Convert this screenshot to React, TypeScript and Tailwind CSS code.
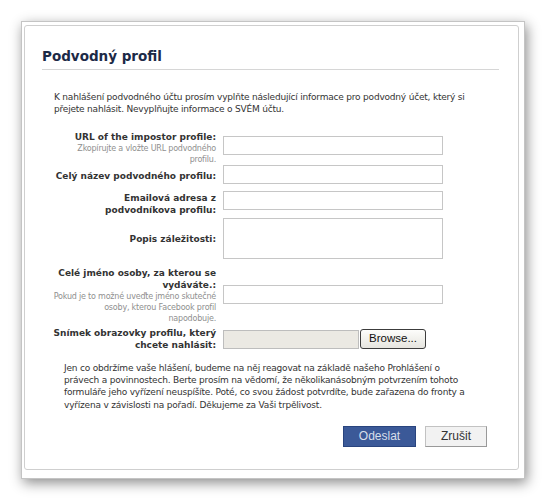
const LABEL = "w-[191px] shrink-0 text-right font-bold text-[9px] leading-[12px] text-[#333]";
const HINT = "text-[8px] leading-[11px] font-normal tracking-[-0.2px] text-[#8f8f8f]";
const FIELD = "block h-[19px] w-[220px] border border-[#c6c6c6] bg-white";

export default function App() {
  return (
    <main className="min-h-[500px] w-[546px] bg-white pl-[21px] pt-[21px] font-['DejaVu_Sans',sans-serif]">
      <div className="h-[458px] w-[504px] border border-[#c4c4c4] bg-white pl-[2px] pt-[3px] shadow-[2px_4px_12px_rgba(0,0,0,0.45)]">
        <div className="h-[445px] w-[495px] rounded-[3px] border border-[#cfcfcf]">
          <div className="ml-[17px] mr-[19px] mt-[22px] border-b border-[#d6d6d6] pb-[5px]">
            <h1 className="text-[13.5px] font-bold leading-[16px] text-[#1c2a47]">Podvodný profil</h1>
          </div>

          <p className="ml-[29px] mt-[21px] text-[9px] leading-[12px] tracking-[-0.2px] text-[#333]">
            K nahlášení podvodného účtu prosím vyplňte následující informace pro podvodný účet, který si
            <br />
            přejete nahlásit. Nevyplňujte informace o SVÉM účtu.
          </p>

          <form className="mt-[16px]" onSubmit={(e) => e.preventDefault()}>
            <div className="flex items-start gap-[7px]">
              <div className={LABEL}>
                <div>URL of the impostor profile:</div>
                <div className={HINT}>
                  Zkopírujte a vložte URL podvodného
                  <br />
                  profilu.
                </div>
              </div>
              <input className={`${FIELD} mt-[5px]`} />
            </div>

            <div className="flex items-start gap-[7px]">
              <div className={`${LABEL} mt-[5px]`}>Celý název podvodného profilu:</div>
              <input className={FIELD} />
            </div>

            <div className="mt-[7px] flex items-start gap-[7px]">
              <div className={`${LABEL} mt-[1px]`}>
                Emailová adresa z
                <br />
                podvodníkova profilu:
              </div>
              <input className={FIELD} />
            </div>

            <div className="mt-[2px] flex items-center gap-[7px]">
              <div className={LABEL}>Popis záležitosti:</div>
              <textarea className="block h-[41px] w-[220px] resize-none border border-[#c6c6c6] bg-white" />
            </div>

            <div className="mt-[8px] flex items-start gap-[7px]">
              <div className={LABEL}>
                Celé jméno osoby, za kterou se
                <br />
                vydáváte.:
                <div className={HINT}>
                  Pokud je to možné uveďte jméno skutečné
                  <br />
                  osoby, kterou Facebook profil
                  <br />
                  napodobuje.
                </div>
              </div>
              <input className={`${FIELD} mt-[18px]`} />
            </div>

            <div className="mt-[3px] flex items-start gap-[7px]">
              <div className={LABEL}>
                Snímek obrazovky profilu, který
                <br />
                chcete nahlásit:
              </div>
              <div className="mt-[2px] flex items-center">
                <div className="h-[19px] w-[136px] border border-[#bdbdbd] bg-[#ebe9e3]" />
                <button
                  type="button"
                  className="ml-[1px] h-[20px] w-[66px] rounded-[3px] border border-[#3c3c3c] bg-gradient-to-b from-[#fdfdfb] to-[#e6e5df] font-['Liberation_Sans',sans-serif] text-[11.5px] leading-none text-[#111]"
                >
                  Browse...
                </button>
              </div>
            </div>

            <p className="ml-[39px] mt-[11px] text-[9px] leading-[12.2px] tracking-[-0.2px] text-[#333]">
              Jen co obdržíme vaše hlášení, budeme na něj reagovat na základě našeho Prohlášení o
              <br />
              právech a povinnostech. Berte prosím na vědomí, že několikanásobným potvrzením tohoto
              <br />
              formuláře jeho vyřízení neuspíšíte. Poté, co svou žádost potvrdíte, bude zařazena do fronty a
              <br />
              vyřízena v závislosti na pořadí. Děkujeme za Vaši trpělivost.
            </p>

            <div className="mr-[31px] mt-[15px] flex justify-end gap-[9px] font-['Liberation_Sans',sans-serif] text-[12px]">
              <button
                type="submit"
                className="h-[21px] w-[73px] border border-[#29447e] bg-[#3b5998] text-[#d8dfea]"
              >
                Odeslat
              </button>
              <button
                type="button"
                className="h-[21px] w-[62px] border border-[#c2c2c2] border-b-[#999] border-r-[#999] bg-[#f2f2f2] text-[#333]"
              >
                Zrušit
              </button>
            </div>
          </form>
        </div>
      </div>
    </main>
  );
}
